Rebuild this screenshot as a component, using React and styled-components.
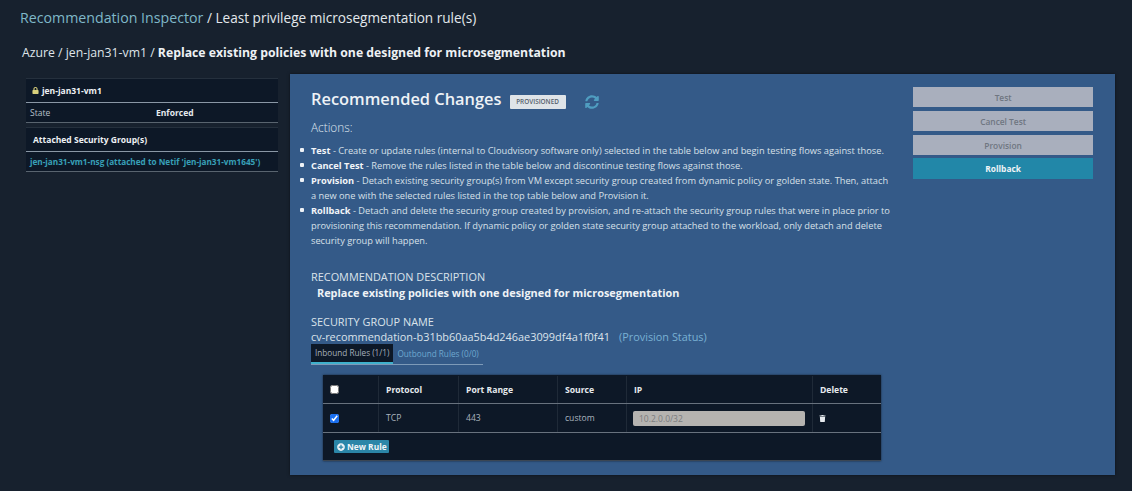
import React from "react";
import styled, { createGlobalStyle } from "styled-components";
import { FaLock, FaTrash, FaPlusCircle, FaSyncAlt } from "react-icons/fa";

const GlobalStyle = createGlobalStyle`
  html, body {
    margin: 0;
    background: #17212e;
    font-family: "Open Sans", "Liberation Sans", sans-serif;
    color: #e8edf2;
  }
`;

const Page = styled.div`
  width: 1132px;
  height: 491px;
  overflow: hidden;
  background: #17212e;
  padding: 8px 17px 0 20px;
  box-sizing: border-box;
`;

const Breadcrumb = styled.div`
  font-size: 13.6px;
  line-height: 20px;
  color: #e3e8ec;
`;

const BreadcrumbLink = styled.span`
  font-size: 14.2px;
  color: #7fb8c8;
`;

const SubHeading = styled.div`
  margin: 15px 0 0 2px;
  font-size: 12.25px;
  line-height: 20px;
  color: #dfe4e9;
  strong {
    font-weight: 700;
    color: #eef1f4;
  }
`;

const Columns = styled.div`
  display: flex;
  margin-top: 11px;
`;

const Sidebar = styled.aside`
  width: 252px;
  margin: 4px 12px 0 6px;
  display: flex;
  flex-direction: column;
  gap: 4px;
`;

const InfoCard = styled.div`
  background: #0d1827;
  font-size: 8.5px;
`;

const CardHead = styled.div`
  height: 25px;
  display: flex;
  align-items: center;
  gap: 3px;
  padding-left: ${(p) => p.$indent}px;
  font-weight: 700;
  color: #eef1f4;
  border-top: 1px solid #25303d;
  border-bottom: 1px solid #8a97a5;
  box-sizing: border-box;
`;

const CardRow = styled.div`
  height: 20px;
  display: grid;
  grid-template-columns: 126px 1fr;
  align-items: center;
  padding-left: 4px;
  color: #b7c0ca;
  border-bottom: 1px solid #59646f;
  box-sizing: border-box;
  strong {
    color: #e6eaee;
  }
`;

const GroupLink = styled.div`
  height: 20px;
  line-height: 20px;
  padding-left: 4px;
  font-weight: 700;
  font-size: 8.2px;
  white-space: nowrap;
  color: #38a0b8;
  border-bottom: 1px solid #59646f;
  box-sizing: border-box;
`;

const LockIcon = styled(FaLock)`
  color: #d8cf7c;
  font-size: 7px;
`;

const Panel = styled.main`
  width: 825px;
  height: 401px;
  background: #345a88;
  display: flex;
  box-sizing: border-box;
  padding: 13px 22px 0 21px;
  box-shadow: 0 0 3px rgba(0, 0, 0, 0.5);
`;

const Details = styled.div`
  width: 580px;
  min-width: 0;
`;

const TitleRow = styled.div`
  display: flex;
  align-items: center;
  height: 24px;
`;

const Title = styled.h2`
  margin: 0;
  font-size: 16.4px;
  line-height: 24px;
  font-weight: 600;
  color: #eef2f6;
`;

const Badge = styled.span`
  margin: 5px 0 0 8px;
  width: 56px;
  height: 14px;
  line-height: 14px;
  text-align: center;
  background: #dfe4e8;
  color: #56616c;
  font-size: 6.4px;
  font-weight: 600;
  border-radius: 1px;
`;

const RefreshIcon = styled(FaSyncAlt)`
  margin: 6px 0 0 19px;
  font-size: 14px;
  color: #4f9dc0;
`;

const ActionsLabel = styled.div`
  margin-top: 8px;
  font-size: 11.8px;
  line-height: 16px;
  font-weight: 300;
  color: #dfe6ee;
`;

const ActionList = styled.ul`
  margin: 8px 0 0;
  padding: 0;
  max-width: 579px;
  list-style: none;
  font-size: 9.28px;
  line-height: 15px;
  color: #d8e0e8;
`;

const ActionItem = styled.li`
  position: relative;
  strong {
    color: #f2f5f8;
  }
  &::before {
    content: "";
    position: absolute;
    left: -11px;
    top: 5px;
    width: 4px;
    height: 4px;
    border-radius: 1px;
    background: #eef2f6;
  }
`;

const SectionLabel = styled.div`
  margin-top: ${(p) => p.$top}px;
  font-size: 10.9px;
  line-height: 15px;
  color: #dbe3eb;
`;

const SectionValue = styled.div`
  margin: 1px 0 0 6px;
  font-size: 10.9px;
  line-height: 16px;
  font-weight: 700;
  color: #eef2f6;
`;

const GroupName = styled.div`
  font-size: 10.9px;
  line-height: 15px;
  white-space: nowrap;
  color: #dbe3eb;
`;

const StatusLink = styled.span`
  margin-left: 9px;
  color: #79b1d4;
`;

const Tabs = styled.div`
  display: flex;
  width: 172px;
  border-bottom: 1px solid #7d9ab8;
`;

const Tab = styled.div`
  height: 20px;
  line-height: 18px;
  padding: 0 4px;
  box-sizing: border-box;
  font-size: 8.2px;
  white-space: nowrap;
  margin-bottom: ${(p) => (p.$active ? "-1px" : "0")};
  padding-top: ${(p) => (p.$active ? "0" : "1px")};
  background: ${(p) => (p.$active ? "#0d1827" : "transparent")};
  color: ${(p) => (p.$active ? "#a5b0bc" : "#6fa8cf")};
  border-bottom: ${(p) => (p.$active ? "2px solid #3fb0cc" : "none")};
`;

const RulesTable = styled.div`
  margin: 10px 0 0 12px;
  width: 558px;
  background: #0d1827;
  box-shadow: 0 0 2px rgba(0, 0, 0, 0.6);
  font-size: 8.6px;
`;

const RuleRow = styled.div`
  display: grid;
  grid-template-columns: 55px 80px 99px 69px 186px 69px;
  height: 29px;
  box-sizing: border-box;
  padding-top: ${(p) => (p.$head ? "1px" : "0")};
  border-bottom: 1px solid #68727e;
  font-weight: ${(p) => (p.$head ? 700 : 400)};
  color: ${(p) => (p.$head ? "#e6eaee" : "#aab4bf")};
`;

const RuleCell = styled.div`
  display: flex;
  align-items: center;
  padding-left: 7px;
  border-left: ${(p) => (p.$first ? "none" : "1px solid #1f2a38")};
`;

const Check = styled.input`
  width: 9px;
  height: 9px;
  margin: 0;
  accent-color: #1a6ff0;
`;

const IpField = styled.input`
  width: 172px;
  height: 15px;
  padding: 0 6px;
  margin-left: -1px;
  box-sizing: border-box;
  border: none;
  border-radius: 2px;
  background: #b5b3b0;
  color: #7a7c7e;
  font-family: inherit;
  font-size: 8.5px;
`;

const TrashIcon = styled(FaTrash)`
  margin-left: -1px;
  font-size: 7px;
  color: #e6eaee;
`;

const RuleFooter = styled.div`
  height: 28px;
  display: flex;
  align-items: center;
  padding-left: 11px;
  border-bottom: 1px solid #3b4653;
  box-sizing: border-box;
`;

const NewRuleButton = styled.button`
  height: 13px;
  padding: 0 2px 0 3px;
  display: flex;
  align-items: center;
  gap: 2px;
  border: none;
  border-radius: 1px;
  background: #2b86a8;
  color: #f0f4f7;
  font-family: inherit;
  font-size: 8.4px;
  font-weight: 700;
`;

const ButtonColumn = styled.div`
  margin-left: 23px;
  width: 180px;
  display: flex;
  flex-direction: column;
  gap: 4px;
`;

const ActionButton = styled.button`
  height: ${(p) => (p.$primary ? "21px" : "20px")};
  margin-top: ${(p) => (p.$primary ? "-1px" : "0")};
  padding: 0;
  border: none;
  font-family: inherit;
  font-size: 8.4px;
  font-weight: ${(p) => (p.$primary ? 700 : 600)};
  background: ${(p) => (p.$primary ? "#2287a8" : "#a9afbd")};
  color: ${(p) => (p.$primary ? "#f0f4f7" : "#6f7681")};
`;

const actions = [
  ["Test", "Create or update rules (internal to Cloudvisory software only) selected in the table below and begin testing flows against those."],
  ["Cancel Test", "Remove the rules listed in the table below and discontinue testing flows against those."],
  ["Provision", "Detach existing security group(s) from VM except security group created from dynamic policy or golden state. Then, attach a new one with the selected rules listed in the top table below and Provision it."],
  ["Rollback", "Detach and delete the security group created by provision, and re-attach the security group rules that were in place prior to provisioning this recommendation. If dynamic policy or golden state security group attached to the workload, only detach and delete security group will happen."],
];

export default function App() {
  return (
    <Page>
      <GlobalStyle />
      <Breadcrumb>
        <BreadcrumbLink>Recommendation Inspector</BreadcrumbLink> / Least privilege microsegmentation rule(s)
      </Breadcrumb>
      <SubHeading>
        Azure / jen-jan31-vm1 / <strong>Replace existing policies with one designed for microsegmentation</strong>
      </SubHeading>
      <Columns>
        <Sidebar>
          <InfoCard>
            <CardHead $indent={6}>
              <LockIcon /> jen-jan31-vm1
            </CardHead>
            <CardRow>
              <span>State</span>
              <strong>Enforced</strong>
            </CardRow>
          </InfoCard>
          <InfoCard>
            <CardHead $indent={7}>Attached Security Group(s)</CardHead>
            <GroupLink>jen-jan31-vm1-nsg (attached to Netif 'jen-jan31-vm1645')</GroupLink>
          </InfoCard>
        </Sidebar>
        <Panel>
          <Details>
            <TitleRow>
              <Title>Recommended Changes</Title>
              <Badge>PROVISIONED</Badge>
              <RefreshIcon />
            </TitleRow>
            <ActionsLabel>Actions:</ActionsLabel>
            <ActionList>
              {actions.map(([name, text]) => (
                <ActionItem key={name}>
                  <strong>{name}</strong> - {text}
                </ActionItem>
              ))}
            </ActionList>
            <SectionLabel $top={21}>RECOMMENDATION DESCRIPTION</SectionLabel>
            <SectionValue>Replace existing policies with one designed for microsegmentation</SectionValue>
            <SectionLabel $top={13}>SECURITY GROUP NAME</SectionLabel>
            <GroupName>
              cv-recommendation-b31bb60aa5b4d246ae3099df4a1f0f41
              <StatusLink>(Provision Status)</StatusLink>
            </GroupName>
            <Tabs>
              <Tab $active>Inbound Rules (1/1)</Tab>
              <Tab>Outbound Rules (0/0)</Tab>
            </Tabs>
            <RulesTable>
              <RuleRow $head>
                <RuleCell $first>
                  <Check type="checkbox" readOnly />
                </RuleCell>
                <RuleCell>Protocol</RuleCell>
                <RuleCell>Port Range</RuleCell>
                <RuleCell>Source</RuleCell>
                <RuleCell>IP</RuleCell>
                <RuleCell>Delete</RuleCell>
              </RuleRow>
              <RuleRow>
                <RuleCell $first>
                  <Check type="checkbox" checked readOnly />
                </RuleCell>
                <RuleCell>TCP</RuleCell>
                <RuleCell>443</RuleCell>
                <RuleCell>custom</RuleCell>
                <RuleCell>
                  <IpField value="10.2.0.0/32" readOnly />
                </RuleCell>
                <RuleCell>
                  <TrashIcon />
                </RuleCell>
              </RuleRow>
              <RuleFooter>
                <NewRuleButton>
                  <FaPlusCircle size={8} /> New Rule
                </NewRuleButton>
              </RuleFooter>
            </RulesTable>
          </Details>
          <ButtonColumn>
            <ActionButton>Test</ActionButton>
            <ActionButton>Cancel Test</ActionButton>
            <ActionButton>Provision</ActionButton>
            <ActionButton $primary>Rollback</ActionButton>
          </ButtonColumn>
        </Panel>
      </Columns>
    </Page>
  );
}
